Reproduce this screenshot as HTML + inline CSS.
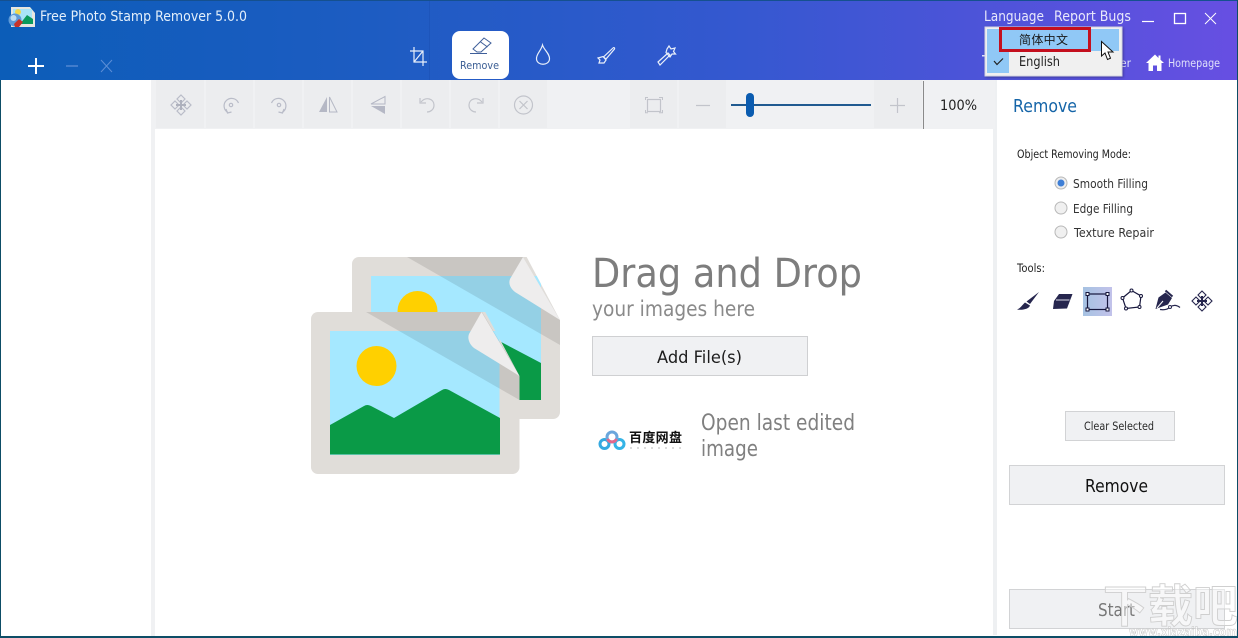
<!DOCTYPE html>
<html><head><meta charset="utf-8"><style>
html,body{margin:0;padding:0;background:#fff;width:1238px;height:638px;overflow:hidden}
svg{display:block;position:absolute;left:0;top:0}
text{font-family:"DejaVu Sans","Noto Sans CJK SC",sans-serif}
</style></head><body>
<svg width="1238" height="638" viewBox="0 0 1238 638" xmlns="http://www.w3.org/2000/svg">
<defs>
<linearGradient id="hd" x1="0" x2="1" y1="0" y2="0"><stop offset="0" stop-color="#0c5db8"/><stop offset=".3" stop-color="#1d5cc2"/><stop offset=".6" stop-color="#3558d0"/><stop offset="1" stop-color="#674fe2"/></linearGradient>
<linearGradient id="sel" x1="0" x2="1" y1="0" y2="0"><stop offset="0" stop-color="#a6c2e2"/><stop offset="1" stop-color="#c2c2ea"/></linearGradient>
<filter id="sh" x="-10%" y="-10%" width="120%" height="130%"><feDropShadow dx="1" dy="1" stdDeviation="1.200" flood-color="#000" flood-opacity=".3"/></filter>
<clipPath id="backclip"><path d="M345 250H523L560 320V425H345Z"/></clipPath>
<clipPath id="frontclip"><path d="M305 305H481.500L519.500 376V480H305Z"/></clipPath>
</defs>

<!-- base -->
<rect width="1238" height="638" fill="#fff"/>
<rect x="151" y="80" width="5" height="558" fill="#f0f1f3"/>
<rect x="993" y="80" width="4" height="555" fill="#eef0f2"/>

<!-- header -->
<rect width="1238" height="80" fill="url(#hd)"/>
<rect width="1238" height="1" fill="#15508f"/>
<rect x="429" y="1" width="1" height="79" fill="#1c52b8" opacity=".7"/>

<!-- app icon -->
<g>
<path d="M11 7H30L35 13V27H11Z" fill="#e6e6e0"/>
<rect x="13" y="9" width="19" height="15" fill="#a8e4f8"/>
<circle cx="18" cy="12" r="3" fill="#f2d84a"/>
<path d="M20 24L27 15L33 19V24Z" fill="#0b9a5c"/>
<circle cx="15" cy="20" r="6.500" fill="#5d9ad8"/>
<circle cx="13.500" cy="18" r="3" fill="#bcdcf2"/>
<path d="M14 24L19 19L23 22L19 27H15Z" fill="#c8322a"/>
</g>
<text x="40" y="21" font-size="14" fill="#e3effb" textLength="207" lengthAdjust="spacingAndGlyphs">Free Photo Stamp Remover 5.0.0</text>

<!-- left add/remove -->
<path d="M36 58V74M28 66H44" stroke="#fff" stroke-width="2" fill="none"/>
<path d="M66 66H78" stroke="#5c8ed6" stroke-width="1.300" fill="none"/>
<path d="M101 60L112 72M112 60L101 72" stroke="#5c8ed6" stroke-width="1" fill="none"/>

<!-- crop icon -->
<path d="M414 47V62H427M410 51H423V66M414 62L423 51" stroke="#e8effa" stroke-width="1.200" fill="none"/>

<!-- active tab -->
<rect x="452" y="31" width="57" height="48" rx="8" fill="#fff"/>
<path d="M473 49L484 38L491 43L481 52H477Z" fill="none" stroke="#3f5f9a" stroke-width="1"/>
<path d="M480 41.500L487.500 47" stroke="#3f5f9a" stroke-width="1"/>
<path d="M470 53.500H487" stroke="#3f5f9a" stroke-width="1"/>
<text x="460" y="69" font-size="11" fill="#3a5d93" textLength="39" lengthAdjust="spacingAndGlyphs">Remove</text>

<!-- drop -->
<path d="M542.500 45C544 50 550 54 549.500 59C549 66 537 66 536.500 59C536 54 541 51 542.500 45Z" fill="none" stroke="#e8effa" stroke-width="1.200"/>
<!-- brush -->
<path d="M613 48C614 47 615 48 614.500 49L606 59L603.500 57Z" fill="none" stroke="#e8effa" stroke-width="1.200"/>
<path d="M598 58L603 56.500L606 60L604 63H599L600 60Z" fill="none" stroke="#e8effa" stroke-width="1.200"/>
<!-- wand -->
<path d="M658 62L668 53L670 55L660 65Z" fill="none" stroke="#e8effa" stroke-width="1.200"/>
<path d="M667 49L669 46L671 49L675 48L673.500 51.500L675.500 54L672 54L670 57L666 52.500Z" fill="none" stroke="#e8effa" stroke-width="1.200"/>

<!-- title-right -->
<text x="984" y="21" font-size="14" fill="#e8e8fb" textLength="60" lengthAdjust="spacingAndGlyphs">Language</text>
<text x="1054" y="21" font-size="14" fill="#e8e8fb" textLength="77" lengthAdjust="spacingAndGlyphs">Report Bugs</text>
<path d="M1142 21.500H1154" stroke="#fff" stroke-width="1.200"/>
<rect x="1174.500" y="13.500" width="11" height="10" fill="none" stroke="#fff" stroke-width="1.300"/>
<path d="M1205 13L1216 24M1216 13L1205 24" stroke="#fff" stroke-width="1"/>

<!-- behind dropdown -->
<text x="1120" y="67" font-size="11.500" fill="#dfe0fa" textLength="11" lengthAdjust="spacingAndGlyphs">er</text>
<path d="M1155 54.500L1146 63H1148.500V71H1153V65.500H1157V71H1161.500V63H1164L1160.500 59.800V55.500H1158.500V58Z" fill="#fff"/>
<text x="1168" y="67" font-size="11.500" fill="#dfe0fa" textLength="52" lengthAdjust="spacingAndGlyphs">Homepage</text>
<rect x="982" y="55" width="3" height="1.500" fill="#dfe0fa"/>

<!-- dropdown -->
<rect x="985" y="27" width="137" height="49" fill="#f0f0f0" stroke="#d4d4e2" filter="url(#sh)"/>
<rect x="987" y="29" width="132" height="22" fill="#90c8f6"/>
<rect x="987" y="51" width="22" height="22" fill="#90c8f6"/>
<path d="M994 61L997 64.500L1003 58.500" fill="none" stroke="#222" stroke-width="1.200"/>
<rect x="1000.500" y="28.500" width="89" height="22" fill="none" stroke="#c40f1e" stroke-width="3"/>
<text x="1019" y="44" font-size="12" fill="#1a1a1a" textLength="49">简体中文</text>
<text x="1019" y="66" font-size="13" fill="#222" textLength="41" lengthAdjust="spacingAndGlyphs">English</text>
<!-- cursor -->
<path d="M1101.500 41.500V56L1105 53L1107.500 59.500L1110.500 58.200L1108 52H1113Z" fill="#fff" stroke="#111" stroke-width="1"/>

<!-- toolbar -->
<rect x="155" y="80" width="840" height="49" fill="#f0f1f3"/>
<g fill="#ecedef">
<rect x="156" y="80" width="48" height="48"/><rect x="206" y="80" width="47" height="48"/><rect x="255" y="80" width="47" height="48"/><rect x="304" y="80" width="47" height="48"/><rect x="353" y="80" width="47" height="48"/><rect x="402" y="80" width="47" height="48"/><rect x="451" y="80" width="47" height="48"/><rect x="500" y="80" width="47" height="48"/><rect x="630" y="80" width="47" height="48"/><rect x="679" y="80" width="47" height="48"/><rect x="874" y="80" width="48" height="48"/>
</g>
<!-- move -->
<g fill="none" stroke="#b9bcc8" stroke-width="1.200">
<path d="M181 95L185 99L181 103L177 99Z"/><path d="M181 107L185 111L181 115L177 111Z"/><path d="M175 101L179 105L175 109L171 105Z"/><path d="M187 101L191 105L187 109L183 105Z"/>
</g>
<path d="M181 100V110M176 105H186" stroke="#aeb1bd" stroke-width="2"/>
<!-- rotate -->
<g fill="none" stroke="#b9bcc8" stroke-width="1.200">
<path d="M238.500 103A7.500 7.500 0 1 0 228 112.500"/><path d="M226 109L227.500 113L231.500 112"/><circle cx="231" cy="105" r="1.700"/>
<path d="M271.500 103A7.500 7.500 0 1 1 282 112.500"/><path d="M284 109L282.500 113L278.500 112"/><circle cx="279" cy="105" r="1.700"/>
</g>
<!-- flips -->
<path d="M327 97V112H319Z" fill="#b5b8c5"/><path d="M329.500 97V112H337Z" fill="none" stroke="#b5b8c5"/>
<path d="M385 96.500V104H371Z" fill="none" stroke="#b5b8c5"/><path d="M385 106V114L371 106Z" fill="#b5b8c5"/>
<!-- undo redo -->
<g fill="none" stroke="#c2c4cb" stroke-width="1.200">
<path d="M421 102C426 96 434 99 434 105C434 110 430 112 427 112"/><path d="M420 98V103H426"/>
<path d="M482 102C477 96 469 99 469 105C469 110 473 112 476 112"/><path d="M483 98V103H477"/>
<circle cx="523.500" cy="105" r="9"/><path d="M519.500 101L527.500 109M527.500 101L519.500 109"/>
<rect x="647.500" y="99.500" width="13" height="12"/>
<path d="M645.500 100V97.500H648M659 97.500H662.500V100M645.500 110V112.800H648M659 112.800H662.500V110" stroke-width="1"/>
<path d="M696 105.500H710M890 105.500H905M897.500 98V113"/>
</g>
<!-- slider -->
<rect x="731" y="104" width="140" height="2" fill="#205a90"/>
<rect x="746" y="93" width="8" height="24" rx="4" fill="#0b5cb0"/>
<rect x="923" y="81" width="1" height="48" fill="#8a8a8a"/>
<text x="940" y="110" font-size="14" fill="#222" textLength="37" lengthAdjust="spacingAndGlyphs">100%</text>

<!-- canvas -->
<rect x="155" y="129" width="838" height="509" fill="#fff"/>

<!-- back photo -->
<g clip-path="url(#backclip)">
<rect x="352" y="257" width="208" height="162" rx="7" fill="#e0ddd9"/>
<rect x="371" y="276" width="170" height="124" fill="#a5e8ff"/>
<circle cx="417.500" cy="311" r="20" fill="#ffd000"/>
<path d="M371 370L408 349L435 363L486 334L541 363V400H371Z" fill="#0a9a47"/>
<path d="M407 257H523L560 320V345Z" fill="#000" opacity=".1"/>
<path d="M523 257L510 279C508 284 511 289 515 292L560 320Z" fill="#eeeded"/>
</g>

<!-- front photo -->
<g clip-path="url(#frontclip)">
<rect x="311" y="312" width="208.500" height="162" rx="7" fill="#e0ddd9"/>
<rect x="330" y="331" width="169.500" height="124" fill="#a5e8ff"/>
<circle cx="376.500" cy="366" r="20" fill="#ffd000"/>
<path d="M330 425L364 406Q367 404 371 406L394 418L442 390Q445 388 449 390L500 418V454.500H330Z" fill="#0a9a47"/>
<path d="M366 312H482L519.500 375V400Z" fill="#000" opacity=".1"/>
<path d="M481.500 312L469 334C467 339 470 345 474 348L519.500 376Z" fill="#eeeded"/>
</g>

<!-- drag text -->
<text x="592" y="287" font-size="40" fill="#7d7d7d" textLength="270" lengthAdjust="spacingAndGlyphs">Drag and Drop</text>
<text x="592" y="316" font-size="21" fill="#8a8a8a" textLength="163" lengthAdjust="spacingAndGlyphs">your images here</text>
<rect x="592.500" y="336.500" width="215" height="39" fill="#f0f1f3" stroke="#cfd0d2"/>
<text x="657" y="363" font-size="17" fill="#1c1c1c" textLength="85" lengthAdjust="spacingAndGlyphs">Add File(s)</text>

<!-- baidu -->
<g fill="none" stroke-width="3">
<circle cx="604.500" cy="444" r="4.500" stroke="#35a9e0"/>
<circle cx="619.500" cy="444" r="4.500" stroke="#35b4e6"/>
<circle cx="612" cy="437" r="5" stroke="#6aa6dc"/>
<path d="M607.500 439A5 5 0 0 0 616.500 439" stroke="#e2688c"/>
</g>
<text x="629" y="442" font-size="13" font-weight="bold" fill="#111" textLength="53">百度网盘</text>
<g fill="#dcdcdc"><rect x="630" y="447" width="2" height="2"/><rect x="637" y="447" width="2" height="2"/><rect x="644" y="447" width="2" height="2"/><rect x="651" y="447" width="2" height="2"/><rect x="658" y="447" width="2" height="2"/><rect x="665" y="447" width="2" height="2"/><rect x="672" y="447" width="2" height="2"/><rect x="679" y="447" width="2" height="2"/></g>
<text x="701" y="430" font-size="22" fill="#808080" textLength="154" lengthAdjust="spacingAndGlyphs">Open last edited</text>
<text x="701" y="456" font-size="22" fill="#808080" textLength="57" lengthAdjust="spacingAndGlyphs">image</text>

<!-- right panel -->
<text x="1013" y="112" font-size="18" fill="#1565a8" textLength="64" lengthAdjust="spacingAndGlyphs">Remove</text>
<text x="1017" y="158" font-size="11.500" fill="#222" textLength="114" lengthAdjust="spacingAndGlyphs">Object Removing Mode:</text>
<circle cx="1061" cy="183" r="6" fill="#eeeeee" stroke="#b8b8b8"/><circle cx="1061" cy="183" r="3.500" fill="#3f7fd6"/>
<circle cx="1061" cy="208" r="6" fill="#f0f0f0" stroke="#b8b8b8"/>
<circle cx="1061" cy="232" r="6" fill="#f0f0f0" stroke="#b8b8b8"/>
<text x="1073" y="188" font-size="12.500" fill="#333" textLength="75" lengthAdjust="spacingAndGlyphs">Smooth Filling</text>
<text x="1073" y="213" font-size="12.500" fill="#333" textLength="60" lengthAdjust="spacingAndGlyphs">Edge Filling</text>
<text x="1074" y="237" font-size="12.500" fill="#333" textLength="80" lengthAdjust="spacingAndGlyphs">Texture Repair</text>
<text x="1017" y="272" font-size="11.500" fill="#222" textLength="28" lengthAdjust="spacingAndGlyphs">Tools:</text>

<!-- tool icons -->
<path d="M1039 292L1030 304L1026.500 301.500Z" fill="#26264e"/>
<path d="M1025 302.500L1030 305.500C1029 309 1022 310.500 1017 309.500C1021 308 1022 305 1025 302.500Z" fill="#26264e"/>
<path d="M1059 294H1072.500L1067 308.500L1053 309L1054 301Z" fill="#26264e"/>
<path d="M1056 300H1069.500" stroke="#dcdce8" stroke-width="1"/>
<rect x="1083" y="287" width="29" height="29" fill="url(#sel)"/>
<g fill="none" stroke="#16163c" stroke-width="1.200">
<rect x="1087.500" y="294" width="20" height="15.500"/>
<path d="M1131.500 290.500L1141 296L1139.500 307L1126 308.500L1122.500 298Z"/>
</g>
<g fill="#fff" stroke="#16163c" stroke-width="1">
<rect x="1086" y="292.500" width="3" height="3"/><rect x="1106" y="292.500" width="3" height="3"/><rect x="1086" y="308" width="3" height="3"/><rect x="1106" y="308" width="3" height="3"/>
<circle cx="1131.500" cy="290.500" r="1.500"/><circle cx="1141" cy="296" r="1.500"/><circle cx="1139.500" cy="307" r="1.500"/><circle cx="1126" cy="308.500" r="1.500"/><circle cx="1122.500" cy="298" r="1.500"/>
</g>
<path d="M1155.500 309L1158.500 297.500L1165.500 292.500L1172 298L1168 304.500Z" fill="#26264e"/>
<path d="M1165.500 290.500L1172.500 296.500" stroke="#26264e" stroke-width="2"/>
<path d="M1157 308L1163 301" stroke="#fff" stroke-width="1"/>
<path d="M1160 309.500Q1167 310.500 1170 307Q1175 303.500 1180 307.500" fill="none" stroke="#26264e" stroke-width="1.200"/>
<circle cx="1170" cy="307" r="1.500" fill="#fff" stroke="#26264e"/>
<g fill="none" stroke="#26264e" stroke-width="1.100">
<path d="M1202 291L1206 295L1202 299L1198 295Z"/><path d="M1202 303L1206 307L1202 311L1198 307Z"/><path d="M1196 297L1200 301L1196 305L1192 301Z"/><path d="M1208 297L1212 301L1208 305L1204 301Z"/>
</g>
<path d="M1202 296V306M1197 301H1207" stroke="#26264e" stroke-width="2"/>

<!-- buttons -->
<rect x="1065.500" y="411.500" width="109" height="29" fill="#f0f1f3" stroke="#d2d3d5"/>
<text x="1084" y="430" font-size="11.500" fill="#2a2a2a" textLength="70" lengthAdjust="spacingAndGlyphs">Clear Selected</text>
<rect x="1009.500" y="465.500" width="215" height="39" fill="#f0f1f3" stroke="#d2d3d5"/>
<text x="1085" y="492" font-size="18" fill="#111" textLength="63" lengthAdjust="spacingAndGlyphs">Remove</text>
<rect x="1009.500" y="589.500" width="215" height="39" fill="#f0f1f3" stroke="#d2d3d5"/>
<text x="1098" y="616" font-size="18" fill="#777" textLength="37" lengthAdjust="spacingAndGlyphs">Start</text>

<!-- watermark -->
<g font-size="45" font-weight="bold" fill="#fff" fill-opacity=".45" stroke="#cfcfcf" stroke-width=".9">
<text x="1103" y="622">下</text><text x="1148" y="622">载</text><text x="1193" y="622">吧</text>
</g>
<text x="1129" y="636" font-size="12" font-weight="bold" fill="#fff" fill-opacity=".6" stroke="#c4c4c4" stroke-width=".5" textLength="108" lengthAdjust="spacingAndGlyphs">www.xiazaiba.com</text>

<!-- window border -->
<rect x="0" y="80" width="1" height="558" fill="#0d4d66"/>
<rect x="1237" y="0" width="1" height="638" fill="#0d4d66"/>
<rect x="0" y="636" width="1238" height="2" fill="#0d4d66"/>
</svg>
</body></html>
